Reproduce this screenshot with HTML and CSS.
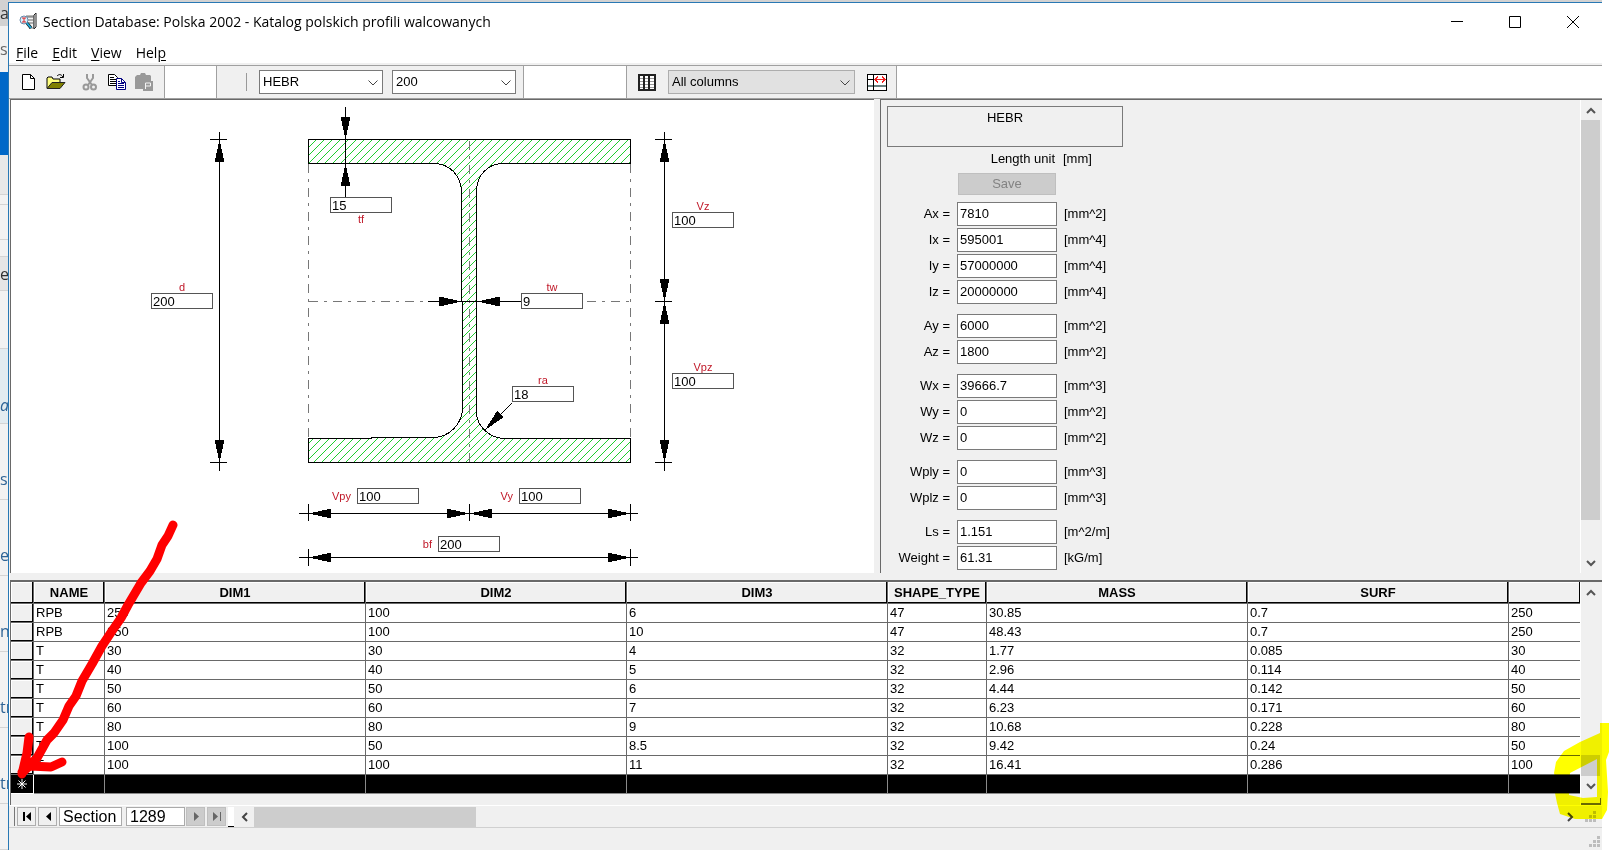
FILE: index.html
```html
<!DOCTYPE html>
<html lang="en">
<head>
<meta charset="utf-8">
<title>Section Database</title>
<link rel="stylesheet" href="styles.css">
</head>
<body>
<div class="desktop">
  <div class="behind" aria-hidden="true">
    <div class="strip s-title">au</div>
    <div class="strip s-tab">s</div>
    <div class="strip s-blue"></div>
    <div class="strip s-gray"></div>
    <div class="strip s-10"></div>
    <div class="strip s-35"></div>
    <div class="strip s-17"></div>
    <div class="strip s-34">e</div>
    <div class="strip s-58"></div>
    <div class="strip s-link"><i>ai</i></div>
    <div class="strip s-row">s</div>
    <div class="strip s-row">e</div>
    <div class="strip s-row">n</div>
    <div class="strip s-row">tr</div>
    <div class="strip s-row">tr</div>
    <div class="strip s-last"></div>
  </div>
  <main class="window">
    <header class="titlebar">
      <svg class="app-icon" width="20" height="20" viewBox="0 0 20 20">
        <path d="M7 4h8v12h-5" fill="#f4f4f4" stroke="#777"/>
        <path d="M15 3l2-2v14l-2 2z" fill="#fff" stroke="#222"/>
        <path d="M6 5h9M9 8h5M10 11h5" stroke="#666"/>
        <circle cx="5" cy="8" r="4" fill="#d8f2ff" stroke="#68a"/>
        <path d="M3 6h4M5 6v4M3 10h4" stroke="#e02020"/>
        <path d="M8 11l4 5" stroke="#111" stroke-width="3"/>
        <path d="M8 11l4 5" stroke="#20a8d8" stroke-width="2"/>
      </svg>
      <h1>Section Database: Polska 2002 - Katalog polskich profili walcowanych</h1>
      <div class="controls">
        <button aria-label="Minimize"><svg width="12" height="12"><path d="M0 5.500h12" stroke="#000"/></svg></button>
        <button aria-label="Maximize"><svg width="12" height="12"><path d="M.5.5h11v11H.5z" fill="none" stroke="#000"/></svg></button>
        <button aria-label="Close"><svg width="12" height="12"><path d="M0 0l12 12M12 0L0 12" stroke="#000"/></svg></button>
      </div>
    </header>
    <nav class="menu">
      <button><span><u>F</u>ile</span></button>
      <button><span><u>E</u>dit</span></button>
      <button><span><u>V</u>iew</span></button>
      <button><span>Hel<u>p</u></span></button>
    </nav>
    <div class="toolbar">
      <div class="band band-file">
        <button aria-label="New"><svg width="20" height="18" viewBox="0 0 20 18"><path d="M3.500 1.500h8l4 4v11h-12z" fill="#fff" stroke="#000"/><path d="M11.500 1.500v4h4" fill="none" stroke="#000"/></svg></button>
        <button aria-label="Open"><svg width="20" height="18" viewBox="0 0 20 18"><path d="M1 15V5l1-1h4l1 2h7v4" fill="#ffff80" stroke="#000"/><path d="M1 15.500L6 9.500h13l-5 6z" fill="#808000" stroke="#222"/><path d="M11 3c2-2 4-2 6 1M17.500 1v3.500H14" fill="none" stroke="#000"/></svg></button>
        <button class="cut" aria-label="Cut"><svg width="20" height="18" viewBox="0 0 20 18"><path d="M7 1v4l5 7M13 1v4l-5 7" fill="none" stroke="#999" stroke-width="2"/><circle cx="6" cy="14" r="2.500" fill="none" stroke="#999" stroke-width="2"/><circle cx="13.500" cy="14" r="2.500" fill="none" stroke="#999" stroke-width="2"/></svg></button>
        <button aria-label="Copy"><svg width="20" height="18" viewBox="0 0 20 18"><path d="M1.500 1.500h6l3 3v8h-9z" fill="#fff" stroke="#000"/><path d="M3 4.500h4M3 6.500h6M3 8.500h6M3 10.500h6" stroke="#000"/><path d="M9.500 5.500h5l4 4v7h-9z" fill="#fff" stroke="#000080"/><path d="M14.500 5.500v4h4M11 8.500h2M11 10.500h6M11 12.500h6M11 14.500h6" fill="none" stroke="#000080"/></svg></button>
        <button aria-label="Paste"><svg width="20" height="18" viewBox="0 0 20 18"><path d="M3 2h3l1-2h4l1 2h4l1 1v13H1V4z" fill="#999"/><path d="M9 8h10v10H9z" fill="#999"/><path d="M11.500 16v-6h5v3h-5" fill="none" stroke="#f4f4f4"/></svg></button>
      </div>
      <div class="band band-blank"></div>
      <div class="band band-section">
        <span class="divider"></span>
        <span class="combo"><select aria-label="Section family"><option>HEBR</option></select><svg width="10" height="6"><path d="M.5.500L5 5 9.500.5" fill="none" stroke="#444"/></svg></span>
        <span class="combo"><select aria-label="Section size"><option>200</option></select><svg width="10" height="6"><path d="M.5.500L5 5 9.500.5" fill="none" stroke="#444"/></svg></span>
      </div>
      <div class="band band-space"></div>
      <div class="band band-columns">
        <button aria-label="Table"><svg width="18" height="17" shape-rendering="crispEdges"><path d="M0 0h18v17H0z" fill="#222"/><path d="M2 2h3v2H2zM7 2h3v2H7zM12 2h4v2h-4zM2 5h3v2H2zM7 5h3v2H7zM12 5h4v2h-4zM2 8h3v2H2zM7 8h3v2H7zM12 8h4v2h-4zM2 11h3v2H2zM7 11h3v2H7zM12 11h4v2h-4zM2 14h3v1H2zM7 14h3v1H7zM12 14h4v1h-4z" fill="#fff"/><path d="M2 4h3v1H2zM7 4h3v1H7zM12 4h4v1h-4zM2 7h3v1H2zM7 7h3v1H7zM12 7h4v1h-4zM2 10h3v1H2zM7 10h3v1H7zM12 10h4v1h-4zM2 13h3v1H2zM7 13h3v1H7zM12 13h4v1h-4z" fill="#999"/></svg></button>
        <span class="combo combo-wide"><select aria-label="Columns"><option>All columns</option></select><svg width="10" height="6"><path d="M.5.500L5 5 9.500.5" fill="none" stroke="#444"/></svg></span>
        <button aria-label="Fit columns"><svg width="20" height="17" shape-rendering="crispEdges"><path d="M.5.500h19v16H.5z" fill="#fff" stroke="#000"/><path d="M1 12h18" stroke="#688080" stroke-width="2"/><path d="M1 5.500h6M6.500 1v15" stroke="#000"/><path d="M7 5.500h12M11 2.500l-3 3 3 3M15 2.500l3 3-3 3" fill="none" stroke="#f02020"/></svg></button>
      </div>
    </div>

    <div class="panes">
      <section class="drawing-pane">
        <div class="drawing">
          <svg class="plan" width="760" height="473" viewBox="11 100 760 473">
            <defs>
              <pattern id="hatch" width="8" height="8" patternUnits="userSpaceOnUse"><path d="M0 7h1v1H0zM1 6h1v1H1zM2 5h1v1H2zM3 4h1v1H3zM4 3h1v1H4zM5 2h1v1H5zM6 1h1v1H6zM7 0h1v1H7z" fill="#20cc30"/></pattern>
            </defs>
            <path d="M308.500 139.500H630.500V163.500H502C488 164 477 175 476.500 190V413C477 426 489 438 504 438.500H630.500V462.500H308.500V438.500H371L372 437.500H434C449 437 461 425 462.500 410V301.500H461.500V190C460 175 450 164 434 163.500H308.500Z" fill="url(#hatch)" stroke="#000"/>
            <g class="axes">
              <path d="M308.500 164V438M630.500 164V438M469.500 141V462M309 301.500H428M587 301.500H630"/>
            </g>
            <g class="dims">
              <path d="M219.500 132V471M210 139.500H227M210 462.500H227"/>
              <path d="M664.500 132V471M655 139.500H672M655 301.500H672M655 462.500H672"/>
              <path d="M345.500 107V197"/>
              <path d="M428 301.500H521M512 403L485 430"/>
              <path d="M299 513.500H638M308.500 504V521M469.500 504V521M630.500 504V521"/>
              <path d="M299 557.500H638M308.500 549V566M630.500 549V566"/>
            </g>
            <g class="heads">
              <path d="M219.500 140l5 22h-10zM219.500 462l5-22h-10z"/>
              <path d="M664.500 140l5 22h-10zM664.500 301l5-22h-10zM664.500 302l5 22h-10zM664.500 462l5-22h-10z"/>
              <path d="M345.500 139l5-22h-10zM345.500 164l5 22h-10z"/>
              <path d="M462 301.500l-23-5v10zM477 301.500l23-5v10zM485 430l12-19 7 6z"/>
              <path d="M309 513.500l22-5v10zM469 513.500l-22-5v10zM470 513.500l22-5v10zM630 513.500l-22-5v10z"/>
              <path d="M309 557.500l22-5v10zM630 557.500l-22-5v10z"/>
            </g>
          </svg>
          <label class="dim dim-tf under"><span>tf</span><input value="15"></label>
          <label class="dim dim-d"><span>d</span><input value="200"></label>
          <label class="dim dim-tw"><span>tw</span><input value="9"></label>
          <label class="dim dim-ra"><span>ra</span><input value="18"></label>
          <label class="dim dim-vz"><span>Vz</span><input value="100"></label>
          <label class="dim dim-vpz"><span>Vpz</span><input value="100"></label>
          <label class="dim side dim-vpy"><span>Vpy</span><input value="100"></label>
          <label class="dim side dim-vy"><span>Vy</span><input value="100"></label>
          <label class="dim side dim-bf"><span>bf</span><input value="200"></label>
        </div>
      </section>

      <section class="props-pane">
        <form class="props">
          <h2>HEBR</h2>
          <div class="unit-row"><span>Length unit</span><span>[mm]</span></div>
          <button class="save" type="button" disabled>Save</button>
          <div class="group">
            <div class="row"><label for="ax">Ax =</label><input id="ax" value="7810"><span>[mm^2]</span></div>
            <div class="row"><label for="ix">Ix =</label><input id="ix" value="595001"><span>[mm^4]</span></div>
            <div class="row"><label for="iy">Iy =</label><input id="iy" value="57000000"><span>[mm^4]</span></div>
            <div class="row"><label for="iz">Iz =</label><input id="iz" value="20000000"><span>[mm^4]</span></div>
          </div>
          <div class="group">
            <div class="row"><label for="ay">Ay =</label><input id="ay" value="6000"><span>[mm^2]</span></div>
            <div class="row"><label for="az">Az =</label><input id="az" value="1800"><span>[mm^2]</span></div>
          </div>
          <div class="group">
            <div class="row"><label for="wx">Wx =</label><input id="wx" value="39666.7"><span>[mm^3]</span></div>
            <div class="row"><label for="wy">Wy =</label><input id="wy" value="0"><span>[mm^2]</span></div>
            <div class="row"><label for="wz">Wz =</label><input id="wz" value="0"><span>[mm^2]</span></div>
          </div>
          <div class="group">
            <div class="row"><label for="wply">Wply =</label><input id="wply" value="0"><span>[mm^3]</span></div>
            <div class="row"><label for="wplz">Wplz =</label><input id="wplz" value="0"><span>[mm^3]</span></div>
          </div>
          <div class="group">
            <div class="row"><label for="ls">Ls =</label><input id="ls" value="1.151"><span>[m^2/m]</span></div>
            <div class="row"><label for="weight">Weight =</label><input id="weight" value="61.31"><span>[kG/m]</span></div>
          </div>
        </form>
        <div class="vscroll">
          <button type="button" aria-label="Scroll up"><svg width="10" height="7"><path d="M1 6l4-4 4 4" fill="none" stroke="#555" stroke-width="2"/></svg></button>
          <div class="track"><div class="thumb thumb-long"></div></div>
          <button type="button" aria-label="Scroll down"><svg width="10" height="7"><path d="M1 1l4 4 4-4" fill="none" stroke="#555" stroke-width="2"/></svg></button>
        </div>
      </section>
    </div>

    <section class="grid-pane">
      <div class="grid-wrap">
        <table>
          <colgroup><col class="c-head"><col class="c-name"><col class="c-wide"><col class="c-wide"><col class="c-wide"><col class="c-type"><col class="c-wide"><col class="c-wide"><col></colgroup>
          <thead><tr><th></th><th>NAME</th><th>DIM1</th><th>DIM2</th><th>DIM3</th><th>SHAPE_TYPE</th><th>MASS</th><th>SURF</th><th></th></tr></thead>
          <tbody>
            <tr><th></th><td>RPB</td><td>250</td><td>100</td><td>6</td><td>47</td><td>30.85</td><td>0.7</td><td>250</td></tr>
            <tr><th></th><td>RPB</td><td>250</td><td>100</td><td>10</td><td>47</td><td>48.43</td><td>0.7</td><td>250</td></tr>
            <tr><th></th><td>T</td><td>30</td><td>30</td><td>4</td><td>32</td><td>1.77</td><td>0.085</td><td>30</td></tr>
            <tr><th></th><td>T</td><td>40</td><td>40</td><td>5</td><td>32</td><td>2.96</td><td>0.114</td><td>40</td></tr>
            <tr><th></th><td>T</td><td>50</td><td>50</td><td>6</td><td>32</td><td>4.44</td><td>0.142</td><td>50</td></tr>
            <tr><th></th><td>T</td><td>60</td><td>60</td><td>7</td><td>32</td><td>6.23</td><td>0.171</td><td>60</td></tr>
            <tr><th></th><td>T</td><td>80</td><td>80</td><td>9</td><td>32</td><td>10.68</td><td>0.228</td><td>80</td></tr>
            <tr><th></th><td>T</td><td>100</td><td>50</td><td>8.5</td><td>32</td><td>9.42</td><td>0.24</td><td>50</td></tr>
            <tr><th></th><td>T</td><td>100</td><td>100</td><td>11</td><td>32</td><td>16.41</td><td>0.286</td><td>100</td></tr>
            <tr class="new"><th><svg width="10" height="10"><path d="M5 0v10M0 5h10M1.500 1.500l7 7M8.500 1.500l-7 7" stroke="#fff"/></svg></th><td></td><td></td><td></td><td></td><td></td><td></td><td></td><td></td></tr>
          </tbody>
        </table>
      </div>
      <div class="vscroll">
        <button type="button" aria-label="Scroll up"><svg width="10" height="7"><path d="M1 6l4-4 4 4" fill="none" stroke="#555" stroke-width="2"/></svg></button>
        <div class="track end"><div class="thumb thumb-short"></div></div>
        <button type="button" aria-label="Scroll down"><svg width="10" height="7"><path d="M1 1l4 4 4-4" fill="none" stroke="#555" stroke-width="2"/></svg></button>
        <span class="corner"></span>
      </div>
    </section>

    <footer class="record-bar">
      <span class="notch"></span>
      <button class="nav" aria-label="First"><svg width="8" height="9"><path d="M0 0h2v9H0zM8 0v9L3 4.500z"/></svg></button>
      <button class="nav" aria-label="Previous"><svg width="8" height="9"><path d="M7 0v9L2 4.500z"/></svg></button>
      <label class="record-label" for="record">Section</label>
      <input id="record" value="1289">
      <button class="nav off" aria-label="Next" disabled><svg width="8" height="9"><path d="M2 0v9l5-4.500z"/></svg></button>
      <button class="nav off" aria-label="Last" disabled><svg width="8" height="9"><path d="M0 0v9l5-4.500zM7 0h1v9H7z"/></svg></button>
      <span class="nub"></span>
      <button class="hbtn" aria-label="Scroll left"><svg width="7" height="10"><path d="M6 1L2 5l4 4" fill="none" stroke="#444" stroke-width="2"/></svg></button>
      <div class="htrack"><div class="hthumb"></div></div>
      <button class="hbtn" aria-label="Scroll right"><svg width="7" height="10"><path d="M1 1l4 4-4 4" fill="none" stroke="#444" stroke-width="2"/></svg></button>
      <span class="grip-box"><svg class="grip" width="12" height="12"><path d="M8 0h3v3H8zM4 4h3v3H4zM8 4h3v3H8zM0 8h3v3H0zM4 8h3v3H4zM8 8h3v3H8z"/></svg></span>
    </footer>
    <div class="status"><svg class="grip" width="12" height="12"><path d="M8 0h3v3H8zM4 4h3v3H4zM8 4h3v3H8zM0 8h3v3H0zM4 8h3v3H4zM8 8h3v3H8z"/></svg></div>
  </main>

  <svg class="ink red" width="200" height="270" viewBox="0 520 200 270">
    <path d="M173 525L168 536 162 545 157 559 150 571 141 583 128 605 121 618 112 631 102 646 92 664 82 681 76 696 69 706 63 720 54 733 47 740 37 758 22 773M29 737L27 753 22 774M62 762L51 767 30 766 22 772"/>
  </svg>
  <svg class="ink yellow" width="60" height="105" viewBox="1549 720 60 105">
    <path fill-rule="evenodd" d="M1600 723H1609V752L1606 760 1608 792 1607 810 1602 819H1575L1560 814 1557 803 1555 793 1557 785 1554 773 1556 762 1564 751 1580 742 1600 733ZM1597 759L1570 773 1569 795 1583 798 1597 797Z"/>
  </svg>
</div>
</body>
</html>
```

FILE: styles.css
```css
* { box-sizing: border-box; }
body {
  margin: 0;
  background: #fff;
  color: #000;
  font: 13px/18px "Liberation Sans", Arial, sans-serif;
}
button, input, select { font: inherit; color: inherit; margin: 0; padding: 0; border-radius: 0; }
button { border: 0; background: none; display: grid; place-items: center; }
svg { display: block; }

.desktop {
  position: relative;
  display: flex;
  min-height: 100vh;
  padding-right: 7px;
  overflow: hidden;
}

/* Sliver of the window behind */
.behind { width: 8px; flex: none; overflow: hidden; font: 16px/20px "Open Sans", sans-serif; color: #2f6496; background: #f2f2f2; }
.strip { height: 76px; display: flex; align-items: center; overflow: hidden; border-bottom: 1px solid #d4d4d4; }
.s-title { height: 26px; background: #d2d2d2; color: #333; border: 0; }
.s-tab { height: 46px; color: #666; border: 0; }
.s-blue { height: 83px; background: #0068c8; border: 0; }
.s-gray { height: 40px; background: #e8e8e8; }
.s-10 { height: 10px; }
.s-35 { height: 35px; }
.s-17 { height: 17px; }
.s-34 { height: 34px; background: #e6e6e6; color: #333; }
.s-58 { height: 58px; }
.s-link { height: 75px; background: #e2ebf0; align-items: flex-end; padding-bottom: 8px; }
.s-row { padding-top: 34px; }
.s-last { height: 46px; }

.window {
  flex: 1;
  min-width: 0;
  display: flex;
  flex-direction: column;
  margin-top: 2px;
  border-top: 1px solid #2878b4;
  border-left: 1px solid #2878b4;
  background: #fff;
  box-shadow: 0 -2px #d2d2d2;
}

.titlebar { display: flex; align-items: center; height: 37px; padding-left: 10px; }
.titlebar h1 { flex: 1; margin: 0 0 0 4px; font: 14px/20px "Open Sans", sans-serif; white-space: nowrap; }
.controls { display: flex; }
.controls button { width: 58px; height: 36px; }

.menu { display: flex; gap: 14px; height: 25px; padding: 3px 7px 0; border-bottom: 2px solid #f0f0f0; font: 14px/20px "Open Sans", sans-serif; }
.menu u { text-underline-offset: 2px; }

.toolbar { display: flex; height: 34px; border-top: 1px solid #a0a0a0; border-bottom: 1px solid #a0a0a0; }
.band { display: flex; align-items: center; background: #f0f0f0; border-right: 1px solid #a0a0a0; }
.band-file { width: 156px; padding-left: 10px; gap: 7px; }
.band-file .cut { margin-left: 7px; }
.band-file button { width: 20px; }
.band-blank { width: 52px; background: #fff; }
.band-section { width: 307px; padding-left: 29px; gap: 9px; }
.divider { width: 1px; height: 18px; margin-right: 3px; background: #999; }
.band-space { width: 103px; background: #fff; }
.band-columns { width: 270px; padding-left: 11px; gap: 12px; }
.combo { position: relative; width: 124px; }
.combo select { display: block; width: 100%; height: 24px; padding: 0 3px; border: 1px solid #7a7a7a; background: #fff; appearance: none; }
.combo svg { position: absolute; right: 5px; top: 10px; pointer-events: none; }
.combo-wide { width: 187px; }
.combo-wide select { background: #e1e1e1; border-color: #adadad; }

.panes { display: grid; grid-template-columns: minmax(0, 865fr) minmax(0, 722fr); gap: 6px; background: #f0f0f0; }
.drawing-pane, .props-pane { border-top: 1px solid #696969; border-left: 1px solid #696969; }
.drawing-pane { margin-left: 1px; background: #fff; overflow: hidden; }
.props-pane { display: flex; justify-content: space-between; }

/* Dimensioned drawing */
.drawing { position: relative; height: 473px; }
.plan { shape-rendering: crispEdges; }
.axes { fill: none; stroke: #777; stroke-dasharray: 9 6 3 6; }
.dims { fill: none; stroke: #000; }
.dim { position: absolute; display: flex; flex-direction: column; align-items: center; width: 62px; line-height: 12px; }
.dim span { color: #c01828; font-size: 11px; }
.dim input { width: 62px; height: 16px; padding: 0 1px; border: 1px solid #555; background: #fff; }
.dim.under { flex-direction: column-reverse; }
.dim.side { flex-direction: row; justify-content: flex-end; width: 90px; gap: 6px; }
.dim.side input { flex: none; }
.dim-tf { left: 319px; top: 97px; }
.dim-d { left: 140px; top: 181px; }
.dim-tw { left: 510px; top: 181px; }
.dim-ra { left: 501px; top: 274px; }
.dim-vz { left: 661px; top: 100px; }
.dim-vpz { left: 661px; top: 261px; }
.dim-vpy { left: 318px; top: 388px; }
.dim-vy { left: 480px; top: 388px; }
.dim-bf { left: 399px; top: 436px; }

/* Section properties */
.props { padding: 6px 6px 3px; }
.props h2 { width: 236px; height: 41px; margin: 0; padding-top: 2px; border: 1px solid #7a7a7a; font: inherit; text-align: center; }
.unit-row { display: grid; grid-template-columns: 168px auto; gap: 8px; margin-top: 3px; }
.unit-row span:first-child { text-align: right; }
.save { width: 98px; height: 22px; margin: 5px 0 7px 71px; border: 1px solid #bfbfbf; background: #ccc; color: #838383; }
.group { display: grid; gap: 2px; }
.group + .group { margin-top: 10px; }
.row { display: grid; grid-template-columns: 63px 100px auto; gap: 7px; align-items: center; white-space: nowrap; }
.row label { text-align: right; }
.row input { height: 24px; width: 100px; padding: 0 2px 2px; border: 1px solid #7a7a7a; background: #fff; }

.vscroll { display: flex; flex-direction: column; width: 22px; flex: none; padding-right: 1px; border-left: 1px solid #fff; background: #f0f0f0; }
.vscroll button { height: 20px; }
.track { flex: 1; display: flex; flex-direction: column; }
.track.end { justify-content: flex-end; }
.thumb { background: #cdcdcd; margin-right: 1px; }
.thumb-long { flex: 1; margin-bottom: 33px; }
.thumb-short { height: 21px; }

/* Record table */
.grid-pane { display: flex; margin: 7px 0 0 1px; border-top: 2px solid #696969; border-left: 1px solid #696969; box-shadow: 0 -7px #f0f0f0; background: #f0f0f0; }
.grid-wrap { flex: 1; min-width: 0; padding-bottom: 11px; overflow: hidden; }
table { width: 100%; table-layout: fixed; border-spacing: 0; }
.c-head { width: 23px; }
.c-name { width: 71px; }
.c-wide { width: 261px; }
.c-type { width: 99px; }
th { padding: 0; background: #f0f0f0; border: 0 solid #696969; border-width: 0 1px 1px 0; box-shadow: inset -1px -1px #000, inset 1px 1px #fff; white-space: nowrap; }
thead th { height: 22px; }
tbody th { height: 19px; }
td { height: 19px; padding: 0 2px; line-height: 18px; background: #fff; border-right: 1px solid #696969; border-bottom: 1px solid #696969; }
th:last-child, td:last-child { border-right: 0; }
.new th, .new td { background: #000; }
.new td { border-color: #8a8a8a; }
.new th { border-color: #fff; box-shadow: none; }
.new svg { margin: 0 auto; }
.corner { height: 7px; margin-top: 2px; border: solid #696969; border-width: 0 1px 2px 0; }

/* Record navigator and status line */
.record-bar { display: flex; align-items: center; height: 23px; padding-left: 5px; background: #f0f0f0; border-top: 1px solid #fff; border-bottom: 1px solid #d0d0d0; }
.notch { width: 1px; height: 19px; background: #777; margin-right: 2px; }
.nav { width: 19px; height: 19px; margin-right: 2px; border: 1px solid #adadad; background: #f0f0f0; }
.nav.off { background: #ccc; border-color: #bfbfbf; fill: #666; }
.record-label, .record-bar input { height: 19px; border: 1px solid #aaa; background: #fff; padding: 0 3px; font-size: 16px; line-height: 17px; }
.record-label { width: 63px; margin-right: 4px; }
.record-bar input { width: 59px; margin-right: 1px; }
.nub { width: 6px; height: 20px; background: #fff; border-bottom: 1px solid #000; }
.hbtn { width: 20px; height: 20px; }
.htrack { flex: 1; }
.hthumb { width: 17%; height: 20px; background: #cdcdcd; }
.grip-box { width: 22px; display: grid; place-items: center; }
.grip { fill: #bdbdbd; }
.status { flex: 1; min-height: 21px; display: flex; align-items: flex-end; justify-content: flex-end; padding: 0 1px 2px; background: #f0f0f0; }

/* Marker annotations */
.ink { position: absolute; pointer-events: none; }
.red { left: 0; top: 520px; fill: none; stroke: #f00; stroke-width: 9; stroke-linecap: round; stroke-linejoin: round; }
.yellow { right: 0; top: 720px; fill: #ff0; mix-blend-mode: multiply; }
```
